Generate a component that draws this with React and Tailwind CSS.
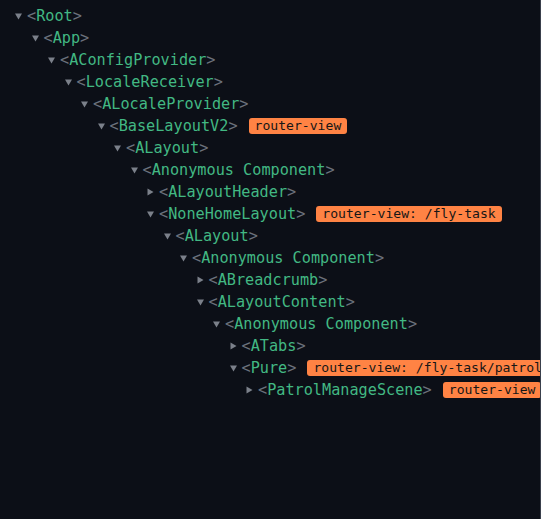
import React from 'react';

const nodes = [
  { name: 'Root', depth: 0, open: true },
  { name: 'App', depth: 1, open: true },
  { name: 'AConfigProvider', depth: 2, open: true },
  { name: 'LocaleReceiver', depth: 3, open: true },
  { name: 'ALocaleProvider', depth: 4, open: true },
  { name: 'BaseLayoutV2', depth: 5, open: true, badge: 'router-view' },
  { name: 'ALayout', depth: 6, open: true },
  { name: 'Anonymous Component', depth: 7, open: true },
  { name: 'ALayoutHeader', depth: 8, open: false },
  { name: 'NoneHomeLayout', depth: 8, open: true, badge: 'router-view: /fly-task' },
  { name: 'ALayout', depth: 9, open: true },
  { name: 'Anonymous Component', depth: 10, open: true },
  { name: 'ABreadcrumb', depth: 11, open: false },
  { name: 'ALayoutContent', depth: 11, open: true },
  { name: 'Anonymous Component', depth: 12, open: true },
  { name: 'ATabs', depth: 13, open: false },
  { name: 'Pure', depth: 13, open: true, badge: 'router-view: /fly-task/patrol' },
  { name: 'PatrolManageScene', depth: 14, open: false, badge: 'router-view' },
];

const Arrow = ({ open }) => (
  <span className="w-[12px] h-[22px] flex items-center shrink-0">
    {open ? (
      <svg width="8" height="7" viewBox="0 0 8 7">
        <path d="M0 0.5 L7 0.5 L3.5 6.5 Z" fill="#7b808a" />
      </svg>
    ) : (
      <svg width="7" height="8" viewBox="0 0 7 8">
        <path d="M0.5 0.5 L6.5 4 L0.5 7.5 Z" fill="#7b808a" />
      </svg>
    )}
  </span>
);

export default function App() {
  return (
    <div className="flex w-[541px] h-[519px] bg-[#0c0f17] overflow-hidden">
      <div className="w-[540px] h-full overflow-hidden pt-[5px] font-['DejaVu_Sans_Mono','Liberation_Mono',monospace]">
        {nodes.map((n, i) => (
          <div
            key={i}
            className="h-[22px] flex items-center whitespace-nowrap"
            style={{ paddingLeft: 15 + n.depth * 16.5 }}
          >
            <Arrow open={n.open} />
            <span className="text-[15.2px] leading-[22px]">
              <span className="text-[#6b717c]">&lt;</span>
              <span className="text-[#42b883]">{n.name}</span>
              <span className="text-[#6b717c]">&gt;</span>
            </span>
            {n.badge && (
              <span className="ml-[11px] h-[16px] px-[6px] rounded-[3px] bg-[#ff8344] text-[#161616] text-[13.1px] leading-[16px] shrink-0">
                {n.badge}
              </span>
            )}
          </div>
        ))}
      </div>
      <div className="w-px h-full bg-[#3a404c]" />
    </div>
  );
}
